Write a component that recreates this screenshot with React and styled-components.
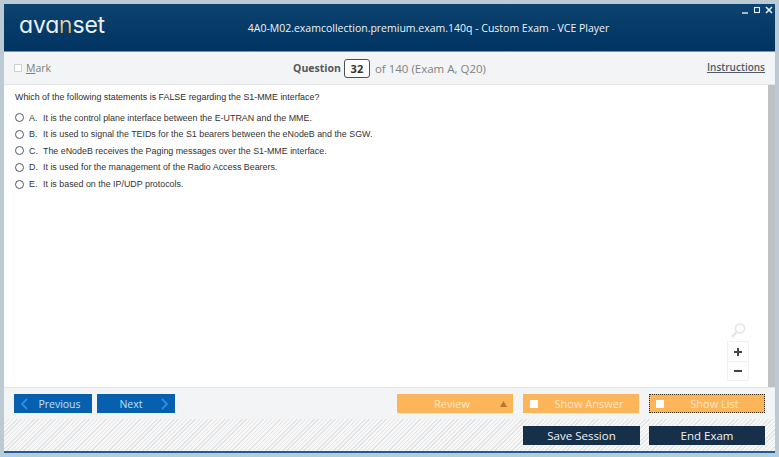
import React from 'react';
import styled, { createGlobalStyle } from 'styled-components';

const Global = createGlobalStyle`
html, body {
  margin: 0;
  padding: 0;
  background: #bccad4;
}
* { box-sizing: border-box; }
`;

const Frame = styled.div`
width: 779px;
height: 457px;
padding: 4px 4px 4px 4px;
background: linear-gradient(180deg, #bccad4 453px, #b4cce0 453px);
overflow: hidden;
display: flex;
flex-direction: column;
font-family: "Open Sans", sans-serif;
`;

const Header = styled.header`
height: 48px;
flex: none;
position: relative;
display: flex;
align-items: center;
background: linear-gradient(180deg, #0d4471 0%, #063a67 50%, #013462 100%);
border-bottom: 1px solid #5b9ec4;
`;

const Logo = styled.div`
width: 100px;
margin-left: 15px;
margin-top: -5px;
font-family: "Inter", sans-serif;
font-feature-settings: "cv11";
font-weight: 400;
font-size: 23px;
letter-spacing: -0.2px;
color: #e9f1f5;
line-height: 26px;
span {
  background: linear-gradient(180deg, #f6e3c2 25%, #e0962f 85%);
  -webkit-background-clip: text;
  background-clip: text;
  color: transparent;
}
`;

const Title = styled.div`
position: absolute;
left: 0;
right: 0;
top: 15px;
text-align: center;
padding-left: 78px;
font-size: 10.5px;
font-weight: 500;
line-height: 18px;
color: #eef3f7;
`;

const WindowButtons = styled.div`
position: absolute;
top: 2px;
right: 2px;
display: flex;
`;

const Toolbar = styled.div`
height: 33px;
flex: none;
display: grid;
grid-template-columns: 1fr auto 1fr;
align-items: center;
background: #f3f4f5;
padding: 0 10px 0 10px;
border-bottom: 1px solid #e3e5e7;
`;

const MarkLabel = styled.div`
display: flex;
align-items: center;
gap: 4px;
font-size: 10.5px;
color: #7d7f81;
`;

const MarkBox = styled.span`
width: 8px;
height: 8px;
background: #fff;
border: 1px solid #cfd1d3;
`;

const QuestionInfo = styled.div`
display: flex;
align-items: center;
font-size: 11.5px;
color: #7f8285;
margin-left: 1px;
margin-right: 1px;
`;

const QuestionWord = styled.span`
font-weight: 700;
font-size: 10.5px;
color: #55585b;
`;

const QuestionNumber = styled.span`
width: 26px;
height: 19px;
margin: 0 5px 0 3px;
border: 1px solid #4c4f52;
border-radius: 3px;
background: #fff;
color: #333;
font-weight: 700;
font-size: 11px;
line-height: 17px;
text-align: center;
`;

const Instructions = styled.a`
justify-self: end;
margin-top: -2px;
font-size: 10px;
font-weight: 600;
color: #4f5c68;
text-decoration: underline;
`;

const Body = styled.div`
flex: 1;
display: flex;
min-height: 0;
`;

const Content = styled.main`
flex: 1;
position: relative;
background: #fff;
padding: 6px 10px;
font-family: "Liberation Sans", Arial, sans-serif;
font-size: 8.9px;
color: #333;
`;

const Scrollbar = styled.div`
width: 7px;
background: #c0c1c2;
`;

const QuestionText = styled.p`
margin: 0 0 6.4px 1px;
line-height: 12px;
color: #2e2e2e;
`;

const AnswerRow = styled.label`
display: flex;
align-items: center;
height: 16.6px;
white-space: nowrap;
`;

const Radio = styled.span`
width: 9px;
height: 9px;
margin: 0 5px 0 1px;
border: 1px solid #55595c;
border-radius: 50%;
background: #fff;
flex: none;
`;

const AnswerKey = styled.span`
width: 14px;
flex: none;
`;

const Zoomer = styled.div`
position: absolute;
right: 19px;
bottom: 6px;
width: 22px;
display: flex;
flex-direction: column;
align-items: center;
`;

const ZoomButtons = styled.div`
width: 22px;
margin-top: 3px;
background: #fff;
border: 1px solid #f0f1f1;
display: flex;
flex-direction: column;
`;

const ZoomButton = styled.div`
height: 19px;
display: flex;
align-items: center;
justify-content: center;
& + & {
  border-top: 1px solid #f0f1f1;
}
`;

const NavBar = styled.div`
height: 32px;
flex: none;
display: flex;
align-items: center;
background: #f3f4f5;
padding: 0 10px 0 10px;
border-top: 1px solid #e3e5e7;
`;

const NavButton = styled.button`
width: 78px;
height: 19px;
margin-right: 5px;
padding: 0 7px;
border: 0;
display: flex;
align-items: center;
justify-content: space-between;
background: #0760ad;
color: #bfe0f4;
font-family: "Open Sans", sans-serif;
font-size: 10.5px;
`;

const Spacer = styled.div`
flex: 1;
`;

const OrangeButton = styled.button`
width: 116px;
height: 19px;
margin-left: ${p => p.$gap}px;
padding: ${p => (p.$focused ? '0 6px' : '0 6px 0 7px')};
display: flex;
align-items: center;
justify-content: space-between;
background: #fdb55a;
color: #fde6c3;
font-family: "Open Sans", sans-serif;
font-size: 11px;
border: ${p => (p.$focused ? '1px dotted #3a2a10' : '0')};
`;

const CheckBox = styled.span`
width: 8px;
height: 8px;
background: #fff;
flex: none;
`;

const ButtonText = styled.span`
flex: 1;
text-align: center;
padding-left: ${p => p.$pad || 0}px;
padding-right: ${p => p.$padRight || 0}px;
`;

const Footer = styled.div`
height: 32px;
flex: none;
display: flex;
justify-content: flex-end;
align-items: center;
gap: 9px;
padding: 0 10px 0 0;
background: repeating-linear-gradient(135deg, #e3e4e5 0 1px, #f7f7f8 1px 3px);
`;

const DarkButton = styled.button`
width: ${p => p.$width}px;
height: 19px;
border: 0;
padding: 0;
background: #17304a;
color: #eef2f5;
font-family: "Open Sans", sans-serif;
font-size: 11.5px;
`;

const BottomLine = styled.div`
height: 2px;
flex: none;
background: #1f5d92;
`;

const Chevron = ({ left }) => (
  <svg width="7" height="12" viewBox="0 0 7 12" fill="none" stroke="#2a8fe6" strokeWidth="1.8">
    <path d={left ? 'M6 1 L1 6 L6 11' : 'M1 1 L6 6 L1 11'} />
  </svg>
);

const answers = [
  ['A.', 'It is the control plane interface between the E-UTRAN and the MME.'],
  ['B.', 'It is used to signal the TEIDs for the S1 bearers between the eNodeB and the SGW.'],
  ['C.', 'The eNodeB receives the Paging messages over the S1-MME interface.'],
  ['D.', 'It is used for the management of the Radio Access Bearers.'],
  ['E.', 'It is based on the IP/UDP protocols.'],
];

export default function App() {
  return (
    <Frame>
      <Global />
      <Header>
        <Logo>ava<span>n</span>set</Logo>
        <Title>4A0-M02.examcollection.premium.exam.140q - Custom Exam - VCE Player</Title>
        <WindowButtons>
          <svg width="31" height="8" viewBox="0 0 31 8" fill="none" stroke="#e6edf2">
            <path d="M0 7 H6" strokeWidth="1.4" />
            <rect x="12.5" y="1.5" width="5" height="5" strokeWidth="1.1" />
            <path d="M24 1 L30 7 M30 1 L24 7" strokeWidth="1.6" />
          </svg>
        </WindowButtons>
      </Header>
      <Toolbar>
        <MarkLabel>
          <MarkBox />
          <span><u>M</u>ark</span>
        </MarkLabel>
        <QuestionInfo>
          <QuestionWord>Question</QuestionWord>
          <QuestionNumber>32</QuestionNumber>
          of 140 (Exam A, Q20)
        </QuestionInfo>
        <Instructions>Instructions</Instructions>
      </Toolbar>
      <Body>
        <Content>
          <QuestionText>Which of the following statements is FALSE regarding the S1-MME interface?</QuestionText>
          {answers.map(a => (
            <AnswerRow key={a[0]}>
              <Radio />
              <AnswerKey>{a[0]}</AnswerKey>
              {a[1]}
            </AnswerRow>
          ))}
          <Zoomer>
            <svg width="15" height="15" viewBox="0 0 15 15" fill="none" stroke="#e3e4e5" strokeWidth="1.5">
              <circle cx="9" cy="5.5" r="4.5" />
              <path d="M5.5 9 L1 14" strokeWidth="2" />
            </svg>
            <ZoomButtons>
              <ZoomButton>
                <svg width="8" height="8" viewBox="0 0 8 8" stroke="#40464c" strokeWidth="2">
                  <path d="M0 4 H8 M4 0 V8" />
                </svg>
              </ZoomButton>
              <ZoomButton>
                <svg width="8" height="8" viewBox="0 0 8 8" stroke="#40464c" strokeWidth="2">
                  <path d="M0 4 H8" />
                </svg>
              </ZoomButton>
            </ZoomButtons>
          </Zoomer>
        </Content>
        <Scrollbar />
      </Body>
      <NavBar>
        <NavButton>
          <Chevron left />
          <ButtonText $pad={6}>Previous</ButtonText>
        </NavButton>
        <NavButton>
          <ButtonText $padRight={3}>Next</ButtonText>
          <Chevron />
        </NavButton>
        <Spacer />
        <OrangeButton $gap={0}>
          <ButtonText>Review</ButtonText>
          <svg width="7" height="6" viewBox="0 0 7 6"><path d="M3.5 0 L7 6 H0 Z" fill="#b5772f" /></svg>
        </OrangeButton>
        <OrangeButton $gap={10}>
          <CheckBox />
          <ButtonText $pad={7}>Show Answer</ButtonText>
        </OrangeButton>
        <OrangeButton $gap={10} $focused>
          <CheckBox />
          <ButtonText $pad={7}>Show List</ButtonText>
        </OrangeButton>
      </NavBar>
      <Footer>
        <DarkButton $width={117}>Save Session</DarkButton>
        <DarkButton $width={116}>End Exam</DarkButton>
      </Footer>
      <BottomLine />
    </Frame>
  );
}
